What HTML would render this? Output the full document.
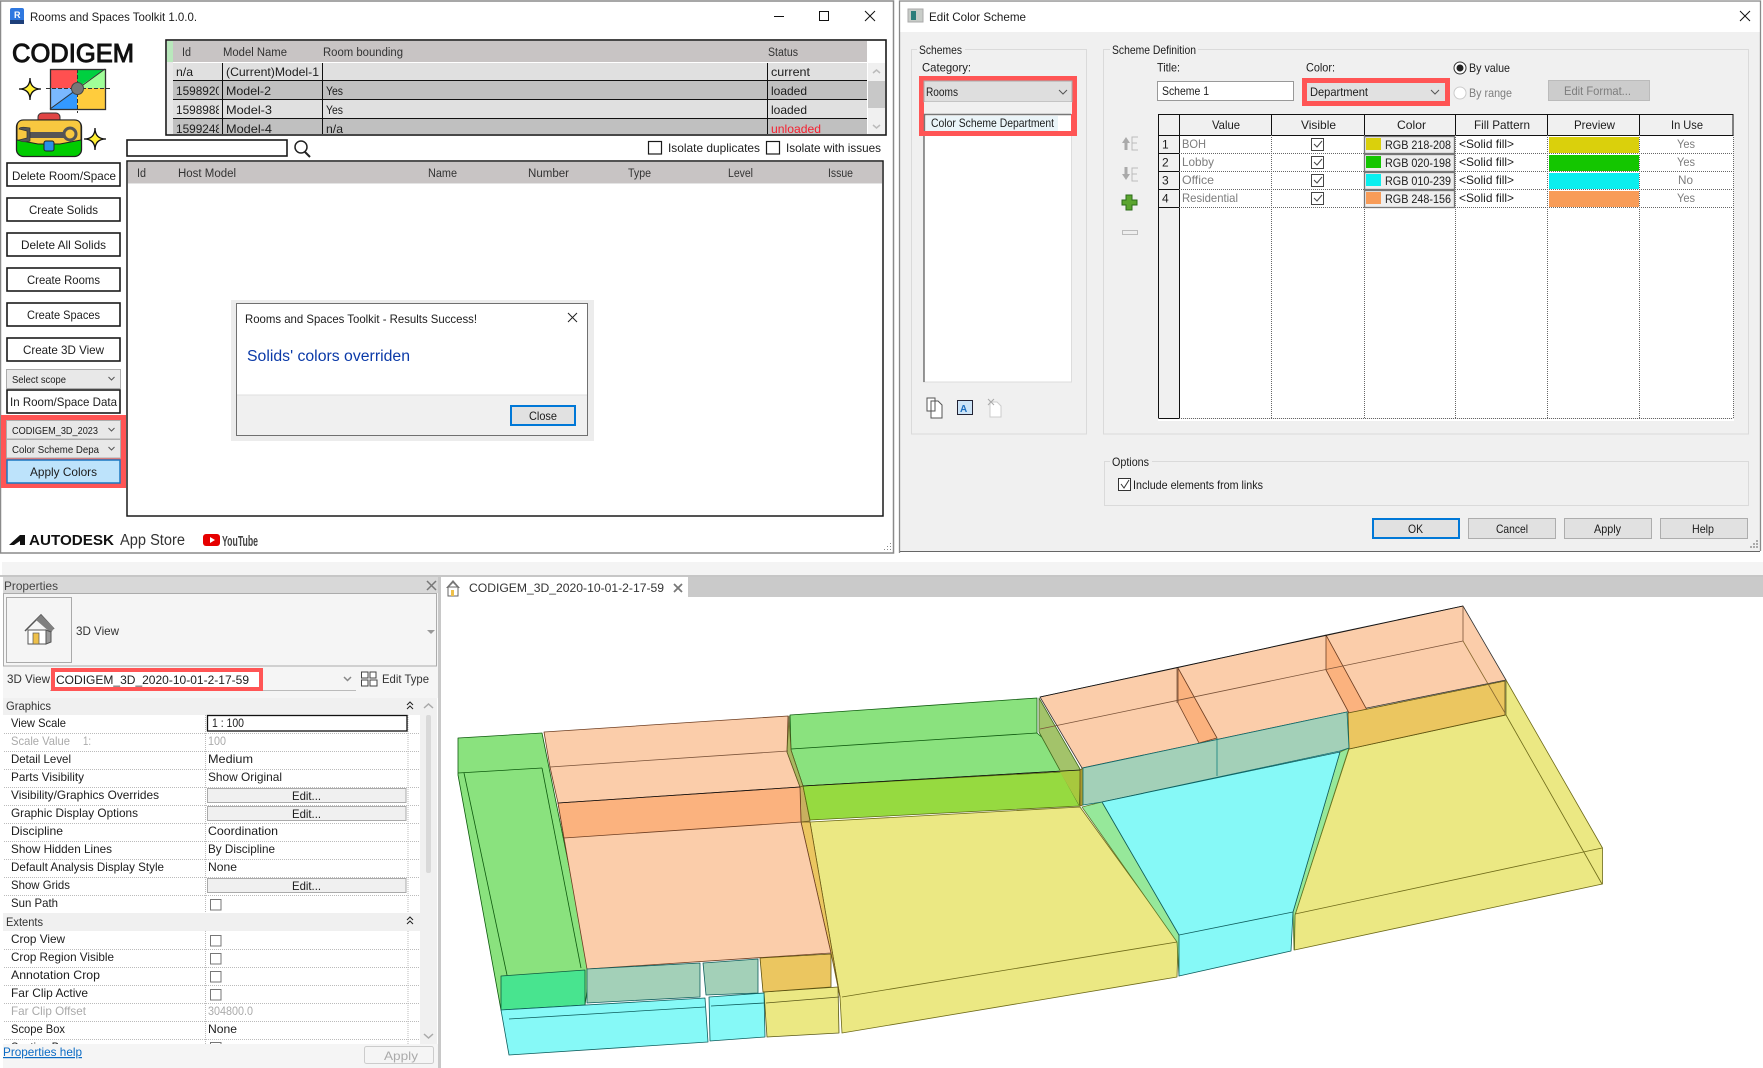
<!DOCTYPE html>
<html><head><meta charset="utf-8"><title>Rooms and Spaces Toolkit</title>
<style>
html,body{margin:0;padding:0;background:#fff;width:1763px;height:1068px;overflow:hidden}
svg{display:block}
text{font-family:"Liberation Sans",sans-serif;font-size:12px;fill:#1c1c1c}
.s{font-size:11.7px}.g{fill:#7d7d7d}.h{font-size:11.5px;fill:#333}
.chev{fill:none;stroke:#555;stroke-width:1}
.k{fill:#fff;stroke:#1a1a1a;stroke-width:1.6}
.d{stroke:#666;stroke-width:1;stroke-dasharray:1 1;fill:none}
.dl{stroke:#bbb;stroke-width:1;stroke-dasharray:1 1;fill:none}
.m polygon{stroke-width:.8;stroke-linejoin:round}
.m line,.m polyline{stroke-width:.8;fill:none}
</style></head><body>
<svg width="1763" height="1068" viewBox="0 0 1763 1068" xmlns="http://www.w3.org/2000/svg">
<rect width="1763" height="1068" fill="#fff"/>

<!-- WINDOW 1 -->
<rect x="0.5" y="1" width="893" height="552" fill="#fff" stroke="#8a8a8a" stroke-width="1.5"/>
<rect x="10" y="8" width="14" height="16" rx="2" fill="#2f78e0"/><rect x="10" y="20" width="14" height="4" fill="#1d3f7a"/>
<text x="14" y="18" style="font-size:9px;font-weight:bold;fill:#fff">R</text>
<text x="30" y="21" textLength="167" lengthAdjust="spacingAndGlyphs">Rooms and Spaces Toolkit 1.0.0.</text>
<line x1="774" y1="16.5" x2="784" y2="16.5" stroke="#111"/>
<rect x="819.5" y="11.5" width="9" height="9" fill="none" stroke="#111"/>
<path d="M865 11l10 10M875 11l-10 10" stroke="#111" fill="none"/>

<!-- logo -->
<text x="12" y="62" textLength="122" lengthAdjust="spacingAndGlyphs" style="font-size:26px;fill:#111;stroke:#111;stroke-width:1">CODIGEM</text>
<polygon points="50,69 77,69 77,88 50,88" fill="#ff5050"/>
<polygon points="77,69 105,69 105,88 77,88" fill="#00d040"/>
<polygon points="105,69 105,88 77,88" fill="#a0ff98"/>
<polygon points="50,88 77,88 77,109 50,109" fill="#7ab8ff"/>
<polygon points="77,88 77,109 50,109" fill="#3399ff"/>
<polygon points="77,88 105,88 105,109 77,109" fill="#ffcc3d"/>
<rect x="50.5" y="69.5" width="55" height="40" fill="none" stroke="#333" stroke-width="1.3"/>
<path d="M46 88.5H110M77.5 69V113" stroke="#333" stroke-width="1" stroke-dasharray="4 2" fill="none"/>
<line x1="50" y1="109" x2="105" y2="69" stroke="#333"/>
<circle cx="77.5" cy="88.5" r="6" fill="#777" stroke="#444"/>
<path d="M30 78Q30 89 41 89Q30 89 30 100Q30 89 19 89Q30 89 30 78Z" fill="#ffee33" stroke="#111" stroke-width="1.3"/>
<path d="M95 128Q95 139 106 139Q95 139 95 150Q95 139 84 139Q95 139 95 128Z" fill="#ffee33" stroke="#111" stroke-width="1.3"/>
<rect x="38" y="113" width="22" height="11" rx="4" fill="#e04545" stroke="#333"/>
<rect x="16.5" y="120" width="65" height="36.5" rx="7" fill="#00cc00" stroke="#222" stroke-width="1.3"/>
<path d="M17 127Q17 120 24 120H74Q81 120 81 127V140L60 144H38L17 140Z" fill="#f8c840" stroke="#222"/>
<path d="M28 135H64" stroke="#555" stroke-width="6"/>
<circle cx="70" cy="134" r="6" fill="#f8c840" stroke="#555" stroke-width="3"/>
<path d="M30 128Q20 126 19 129L27 131V138L19 140Q22 143 30 141Z" fill="#555" stroke="#333" stroke-width=".7"/>
<rect x="44" y="141" width="10" height="10" rx="2" fill="#2a90e8" stroke="#222"/>

<!-- side buttons -->
<rect class="k" x="7" y="163" width="113" height="23"/>
<rect class="k" x="7" y="198" width="113" height="23"/>
<rect class="k" x="7" y="233" width="113" height="23"/>
<rect class="k" x="7" y="268" width="113" height="23"/>
<rect class="k" x="7" y="303" width="113" height="23"/>
<rect class="k" x="7" y="338" width="113" height="23"/>
<text x="12" y="180" textLength="104" lengthAdjust="spacingAndGlyphs">Delete Room/Space</text>
<text x="29" y="214" textLength="69" lengthAdjust="spacingAndGlyphs">Create Solids</text>
<text x="21" y="249" textLength="85" lengthAdjust="spacingAndGlyphs">Delete All Solids</text>
<text x="27" y="284" textLength="73" lengthAdjust="spacingAndGlyphs">Create Rooms</text>
<text x="27" y="319" textLength="73" lengthAdjust="spacingAndGlyphs">Create Spaces</text>
<text x="23" y="354" textLength="81" lengthAdjust="spacingAndGlyphs">Create 3D View</text>
<rect x="6.500" y="369.500" width="114" height="19" fill="#e8e8e8" stroke="#acacac"/>
<text x="12" y="383" textLength="54" lengthAdjust="spacingAndGlyphs" style="font-size:10.5px">Select scope</text>
<path class="chev" d="M108.500 377l3 3 3-3"/>
<rect class="k" x="7" y="390" width="113" height="23"/>
<text x="10" y="406" textLength="107" lengthAdjust="spacingAndGlyphs">In Room/Space Data</text>
<rect x="1" y="415" width="125" height="73" fill="#ff5555"/>
<rect x="6.500" y="420.500" width="114" height="18.500" fill="#e8e8e8" stroke="#acacac"/>
<rect x="6.500" y="439.500" width="114" height="18.500" fill="#e8e8e8" stroke="#acacac"/>
<rect x="7" y="460" width="113" height="23" fill="#bde3fb" stroke="#1a78c2" stroke-width="1.500"/>
<text x="12" y="434" textLength="86" lengthAdjust="spacingAndGlyphs" style="font-size:10.5px">CODIGEM_3D_2023</text>
<path class="chev" d="M108.500 428l3 3 3-3"/>
<text x="12" y="453" textLength="87" lengthAdjust="spacingAndGlyphs" style="font-size:10.5px">Color Scheme Depa</text>
<path class="chev" d="M108.500 447l3 3 3-3"/>
<text x="30" y="476" textLength="67" lengthAdjust="spacingAndGlyphs">Apply Colors</text>

<!-- top table -->
<rect x="166" y="40" width="720" height="95" fill="#fff" stroke="#1a1a1a" stroke-width="1.600"/>
<rect x="167" y="41" width="6" height="21" fill="#b9e8bc"/>
<rect x="173" y="41" width="694" height="21" fill="#c8c4c4"/>
<rect x="167" y="62" width="6" height="72" fill="#e8e8e8"/>
<rect x="173" y="63" width="694" height="17" fill="#e0e0e0"/>
<rect x="173" y="81" width="694" height="18" fill="#c0c0c0"/>
<rect x="173" y="100" width="694" height="18" fill="#e0e0e0"/>
<rect x="173" y="119" width="694" height="15" fill="#c0c0c0"/>
<text class="h" x="182" y="56" textLength="9" lengthAdjust="spacingAndGlyphs">Id</text>
<text class="h" x="223" y="56" textLength="64" lengthAdjust="spacingAndGlyphs">Model Name</text>
<text class="h" x="323" y="56" textLength="80" lengthAdjust="spacingAndGlyphs">Room bounding</text>
<text class="h" x="768" y="56" textLength="30" lengthAdjust="spacingAndGlyphs">Status</text>
<text x="176" y="76" textLength="17" lengthAdjust="spacingAndGlyphs">n/a</text>
<text x="226" y="76" textLength="93" lengthAdjust="spacingAndGlyphs">(Current)Model-1</text>
<text x="771" y="76" textLength="39" lengthAdjust="spacingAndGlyphs">current</text>
<text x="176" y="95" textLength="46" lengthAdjust="spacingAndGlyphs">1598920</text>
<text x="226" y="95" textLength="45" lengthAdjust="spacingAndGlyphs">Model-2</text>
<text x="326" y="95" textLength="17" lengthAdjust="spacingAndGlyphs">Yes</text>
<text x="771" y="95" textLength="36" lengthAdjust="spacingAndGlyphs">loaded</text>
<text x="176" y="114" textLength="46" lengthAdjust="spacingAndGlyphs">1598988</text>
<text x="226" y="114" textLength="46" lengthAdjust="spacingAndGlyphs">Model-3</text>
<text x="326" y="114" textLength="17" lengthAdjust="spacingAndGlyphs">Yes</text>
<text x="771" y="114" textLength="36" lengthAdjust="spacingAndGlyphs">loaded</text>
<text x="176" y="133" textLength="46" lengthAdjust="spacingAndGlyphs">1599248</text>
<text x="226" y="133" textLength="46" lengthAdjust="spacingAndGlyphs">Model-4</text>
<text x="326" y="133" textLength="17" lengthAdjust="spacingAndGlyphs">n/a</text>
<text x="771" y="133" textLength="50" lengthAdjust="spacingAndGlyphs" style="fill:#f52030">unloaded</text>
<rect x="219" y="81" width="3" height="18" fill="#c0c0c0"/><rect x="219" y="100" width="3" height="18" fill="#e0e0e0"/><rect x="219" y="119" width="3" height="15" fill="#c0c0c0"/>
<path d="M173 80.500H867M173 99.500H867M173 118.500H867" stroke="#111" stroke-width="1"/>
<path d="M222.500 63V134M322.500 63V134M767.500 63V134" stroke="#111" stroke-width="1"/>
<rect x="868" y="63" width="17" height="71" fill="#f0f0f0"/>
<rect x="868" y="81" width="17" height="27" fill="#c8c8c8"/>
<path d="M873 73l3.500-3 3.500 3M873 125l3.500 3 3.500-3" fill="none" stroke="#bbb" stroke-width="1.500"/>

<!-- search -->
<rect class="k" x="127" y="140" width="160" height="16" stroke-width="1.300"/>
<circle cx="301" cy="147" r="6" fill="none" stroke="#222" stroke-width="1.500"/>
<line x1="305" y1="152" x2="310" y2="157" stroke="#222" stroke-width="2"/>
<rect class="k" x="648.500" y="141.500" width="13" height="12.500" style="stroke-width:1.200"/>
<text x="668" y="152" textLength="92" lengthAdjust="spacingAndGlyphs">Isolate duplicates</text>
<rect class="k" x="766.500" y="141.500" width="13" height="12.500" style="stroke-width:1.200"/>
<text x="786" y="152" textLength="95" lengthAdjust="spacingAndGlyphs">Isolate with issues</text>

<!-- big table -->
<rect x="127" y="161" width="756" height="355" fill="#fff" stroke="#1a1a1a" stroke-width="1.500"/>
<rect x="128" y="162" width="754" height="21" fill="#c8c4c4"/>
<rect x="128" y="183" width="754" height="1" fill="#e4e4e4"/>
<text class="h" x="137" y="177" textLength="9" lengthAdjust="spacingAndGlyphs">Id</text>
<text class="h" x="178" y="177" textLength="58" lengthAdjust="spacingAndGlyphs">Host Model</text>
<text class="h" x="428" y="177" textLength="29" lengthAdjust="spacingAndGlyphs">Name</text>
<text class="h" x="528" y="177" textLength="41" lengthAdjust="spacingAndGlyphs">Number</text>
<text class="h" x="628" y="177" textLength="23" lengthAdjust="spacingAndGlyphs">Type</text>
<text class="h" x="728" y="177" textLength="25" lengthAdjust="spacingAndGlyphs">Level</text>
<text class="h" x="828" y="177" textLength="25" lengthAdjust="spacingAndGlyphs">Issue</text>

<!-- dialog -->
<rect x="231" y="300" width="363" height="141" fill="#ececec"/>
<rect x="236.500" y="303.500" width="351" height="132" fill="#fff" stroke="#707070"/>
<rect x="237" y="395" width="350" height="40" fill="#f0f0f0"/>
<line x1="237" y1="395" x2="587" y2="395" stroke="#dfdfdf"/>
<text x="245" y="323" textLength="232" lengthAdjust="spacingAndGlyphs">Rooms and Spaces Toolkit - Results Success!</text>
<path d="M568 313l9 9M577 313l-9 9" stroke="#222" fill="none"/>
<text x="247" y="361" textLength="163" lengthAdjust="spacingAndGlyphs" style="font-size:15.500px;fill:#0b3aa8">Solids' colors overriden</text>
<rect x="511" y="406" width="64" height="19" fill="#e1e1e1" stroke="#0078d7" stroke-width="2"/>
<text x="529" y="420" textLength="28" lengthAdjust="spacingAndGlyphs">Close</text>

<!-- footer logos -->
<polygon points="9,545 20,535 25,535 25,545 20,545 20,541 14,545" fill="#111"/>
<text x="29" y="545" textLength="85" lengthAdjust="spacingAndGlyphs" style="font-size:14.500px;font-weight:bold;fill:#111">AUTODESK</text>
<text x="120" y="545" textLength="65" lengthAdjust="spacingAndGlyphs" style="font-size:15.500px;fill:#333">App Store</text>
<rect x="203" y="534" width="17" height="12" rx="3" fill="#e60000"/><polygon points="210,537 215,540 210,543" fill="#fff"/>
<text x="222" y="546" textLength="36" lengthAdjust="spacingAndGlyphs" style="font-size:15px;font-weight:bold;fill:#444">YouTube</text>
<path d="M890 543h1v1h-1zM887 546h1v1h-1zM890 546h1v1h-1zM884 549h1v1h-1zM887 549h1v1h-1zM890 549h1v1h-1z" fill="#888"/>

<!-- WINDOW 2 -->
<rect x="900" y="1" width="860" height="550" fill="#f0f0f0"/>
<rect x="900" y="2" width="860" height="30" fill="#fff"/>
<path d="M899.500 553V1H1760.500V551" fill="none" stroke="#8a8a8a" stroke-width="1.300"/>
<line x1="900" y1="551.500" x2="1760" y2="551.500" stroke="#666"/>
<rect x="908" y="9" width="15" height="13" fill="#c8ccc8" stroke="#aaa"/><rect x="911" y="11" width="5" height="9" fill="#2c7d7a"/>
<text x="929" y="21" textLength="97" lengthAdjust="spacingAndGlyphs">Edit Color Scheme</text>
<path d="M1740 11l10 10M1750 11l-10 10" stroke="#111" fill="none"/>

<!-- schemes group -->
<rect x="911.500" y="49.500" width="175" height="384.500" fill="none" stroke="#dadada"/>
<rect x="917" y="44" width="48" height="12" fill="#f0f0f0"/>
<text class="s" x="919" y="54" textLength="43" lengthAdjust="spacingAndGlyphs">Schemes</text>
<text class="s" x="922" y="71.500" textLength="49" lengthAdjust="spacingAndGlyphs">Category:</text>
<rect x="923.500" y="114" width="148" height="268" fill="#fff" stroke="#ddd"/>
<path d="M924 382V136" stroke="#777" stroke-width="1.500" fill="none"/>
<rect x="919" y="76" width="158" height="60" fill="#ff5555"/>
<rect x="924" y="81" width="148" height="21" fill="#dedede" stroke="#aaa"/>
<rect x="924" y="102" width="148" height="12" fill="#f0f0f0"/>
<rect x="924" y="114" width="147" height="17" fill="#fff"/>
<path d="M924.500 131V114.500H1071" stroke="#777" stroke-width="1.500" fill="none"/>
<rect x="926" y="116" width="132" height="15" fill="#eaf4f8"/>
<text class="s" x="926" y="96" textLength="32" lengthAdjust="spacingAndGlyphs">Rooms</text>
<path class="chev" d="M1059 90l4 4 4-4"/>
<text class="s" x="931" y="127" textLength="123" lengthAdjust="spacingAndGlyphs">Color Scheme Department</text>
<path d="M927 400h8v13h-8zM931 403h7l4 4v13h-11z" transform="translate(0,-2)" fill="#fff" stroke="#555"/>
<rect x="957.500" y="400.500" width="15" height="14" fill="#cde4f7" stroke="#223"/>
<text x="960" y="412" style="font-size:10px;font-weight:bold;fill:#1e6fc0">A</text>
<path d="M990 402h7l4 4v11h-11z" fill="#fff" stroke="#ccc"/>
<path d="M988 399l6 6M994 399l-6 6" stroke="#aaa"/>

<!-- scheme definition -->
<rect x="1103.500" y="49.500" width="645" height="384.500" fill="none" stroke="#dadada"/>
<rect x="1110" y="44" width="88" height="12" fill="#f0f0f0"/>
<text class="s" x="1112" y="54" textLength="84" lengthAdjust="spacingAndGlyphs">Scheme Definition</text>
<text class="s" x="1157" y="71.500" textLength="23" lengthAdjust="spacingAndGlyphs">Title:</text>
<rect x="1157.500" y="81.500" width="136" height="19" fill="#fff" stroke="#999"/>
<text class="s" x="1162" y="95" textLength="47" lengthAdjust="spacingAndGlyphs">Scheme 1</text>
<text class="s" x="1306" y="71.500" textLength="29" lengthAdjust="spacingAndGlyphs">Color:</text>
<rect x="1302" y="78" width="148" height="28" fill="#ff5555"/>
<rect x="1307" y="83" width="138" height="18" fill="#e1e1e1"/>
<text class="s" x="1310" y="96" textLength="58" lengthAdjust="spacingAndGlyphs">Department</text>
<path class="chev" d="M1431 90l4 4 4-4"/>
<circle cx="1460" cy="68" r="6" fill="#fff" stroke="#333"/><circle cx="1460" cy="68" r="3.500" fill="#222"/>
<text class="s" x="1469" y="72" textLength="41" lengthAdjust="spacingAndGlyphs">By value</text>
<circle cx="1460" cy="93" r="6" fill="#fff" stroke="#ccc"/>
<text class="s g" x="1469" y="97" textLength="43" lengthAdjust="spacingAndGlyphs">By range</text>
<rect x="1548.500" y="80.500" width="101" height="20" fill="#ccc" stroke="#bbb"/>
<text class="s g" x="1564" y="95" textLength="67" lengthAdjust="spacingAndGlyphs">Edit Format...</text>

<!-- side tool icons -->
<path d="M1122 143l4-6 4 6h-2.500v7h-3v-7z" fill="#aaa"/><path d="M1138 137h-6v13h6M1132 143h5" fill="none" stroke="#bbb"/>
<path d="M1122 174l4 6 4-6h-2.500v-7h-3v7z" fill="#aaa"/><path d="M1138 168h-6v13h6M1132 174h5" fill="none" stroke="#bbb"/>
<path d="M1126 195h6v5h5v5h-5v5h-6v-5h-4v-5h4z" fill="#5ba52f" stroke="#2c6d1a"/>
<rect x="1122.500" y="230.500" width="15" height="4" fill="#eee" stroke="#bbb"/>

<!-- grid -->
<rect x="1158" y="114" width="575.500" height="304" fill="#fff"/>
<rect x="1158" y="114" width="575.500" height="21" fill="#f0f0f0"/>
<rect x="1159" y="135" width="20" height="283" fill="#f0f0f0"/>
<path d="M1158.500 418.500V114.500H1733M1158 135.500H1733.500M1179.500 114V418M1271.500 114V135M1364.500 114V135M1455.500 114V135M1547.500 114V135M1639.500 114V135M1733 114V135" stroke="#111" fill="none"/>
<path d="M1159 153.500h20M1159 171.500h20M1159 189.500h20M1159 207.500h20M1159 418.500h20" stroke="#111"/>
<path class="d" d="M1179 153.500H1733M1179 171.500H1733M1179 189.500H1733M1179 207.500H1733M1179 418.500H1733M1271.500 135V418M1364.500 135V418M1455.500 135V418M1547.500 135V418M1639.500 135V418M1733.500 135V418"/>
<rect x="1158" y="419" width="576" height="2" fill="#fff"/>
<text class="s" x="1212" y="129" textLength="28" lengthAdjust="spacingAndGlyphs">Value</text>
<text class="s" x="1301" y="129" textLength="35" lengthAdjust="spacingAndGlyphs">Visible</text>
<text class="s" x="1397" y="129" textLength="29" lengthAdjust="spacingAndGlyphs">Color</text>
<text class="s" x="1474" y="129" textLength="56" lengthAdjust="spacingAndGlyphs">Fill Pattern</text>
<text class="s" x="1574" y="129" textLength="41" lengthAdjust="spacingAndGlyphs">Preview</text>
<text class="s" x="1671" y="129" textLength="32" lengthAdjust="spacingAndGlyphs">In Use</text>
<text x="1162" y="148.500">1</text><text x="1162" y="166.500">2</text><text x="1162" y="184.500">3</text><text x="1162" y="202.500">4</text>
<text class="s g" x="1182" y="148" textLength="24" lengthAdjust="spacingAndGlyphs">BOH</text>
<text class="s g" x="1182" y="166" textLength="32" lengthAdjust="spacingAndGlyphs">Lobby</text>
<text class="s g" x="1182" y="184" textLength="32" lengthAdjust="spacingAndGlyphs">Office</text>
<text class="s g" x="1182" y="202" textLength="56" lengthAdjust="spacingAndGlyphs">Residential</text>
<g fill="#fff" stroke="#444">
<rect x="1311.500" y="138.500" width="12" height="12"/><rect x="1311.500" y="156.500" width="12" height="12"/><rect x="1311.500" y="174.500" width="12" height="12"/><rect x="1311.500" y="192.500" width="12" height="12"/>
</g>
<path d="M1314 144l3 3 5-6M1314 162l3 3 5-6M1314 180l3 3 5-6M1314 198l3 3 5-6" fill="none" stroke="#444"/>
<g fill="#eee" stroke="#777" stroke-width="1.300">
<rect x="1364.500" y="136.500" width="90" height="17"/><rect x="1364.500" y="154.500" width="90" height="17"/><rect x="1364.500" y="172.500" width="90" height="17"/><rect x="1364.500" y="190.500" width="90" height="17"/>
</g>
<rect x="1366" y="138" width="15" height="12" fill="#dad00c"/><rect x="1366" y="156" width="15" height="12" fill="#14c600"/><rect x="1366" y="174" width="15" height="12" fill="#0aefef"/><rect x="1366" y="192" width="15" height="12" fill="#f89c58"/>
<text class="s" x="1385" y="149" textLength="66" lengthAdjust="spacingAndGlyphs">RGB 218-208</text>
<text class="s" x="1385" y="167" textLength="66" lengthAdjust="spacingAndGlyphs">RGB 020-198</text>
<text class="s" x="1385" y="185" textLength="66" lengthAdjust="spacingAndGlyphs">RGB 010-239</text>
<text class="s" x="1385" y="203" textLength="66" lengthAdjust="spacingAndGlyphs">RGB 248-156</text>
<text class="s" x="1459" y="148" textLength="55" lengthAdjust="spacingAndGlyphs">&lt;Solid fill&gt;</text>
<text class="s" x="1459" y="166" textLength="55" lengthAdjust="spacingAndGlyphs">&lt;Solid fill&gt;</text>
<text class="s" x="1459" y="184" textLength="55" lengthAdjust="spacingAndGlyphs">&lt;Solid fill&gt;</text>
<text class="s" x="1459" y="202" textLength="55" lengthAdjust="spacingAndGlyphs">&lt;Solid fill&gt;</text>
<rect x="1549" y="137" width="90" height="16" fill="#dad00c"/><rect x="1549" y="155" width="90" height="16" fill="#14c600"/><rect x="1549" y="173" width="90" height="16" fill="#0aefef"/><rect x="1549" y="191" width="90" height="16" fill="#f89c58"/>
<text class="s g" x="1677" y="148" textLength="18" lengthAdjust="spacingAndGlyphs">Yes</text>
<text class="s g" x="1677" y="166" textLength="18" lengthAdjust="spacingAndGlyphs">Yes</text>
<text class="s g" x="1678" y="184" textLength="15" lengthAdjust="spacingAndGlyphs">No</text>
<text class="s g" x="1677" y="202" textLength="18" lengthAdjust="spacingAndGlyphs">Yes</text>

<!-- options -->
<rect x="1104.500" y="461.500" width="644" height="44" fill="none" stroke="#dadada"/>
<rect x="1110" y="456" width="42" height="12" fill="#f0f0f0"/>
<text class="s" x="1112" y="466" textLength="37" lengthAdjust="spacingAndGlyphs">Options</text>
<rect x="1118.500" y="478.500" width="12" height="12" fill="#fff" stroke="#333"/>
<path d="M1121 484l3 4 5-8" fill="none" stroke="#333"/>
<text class="s" x="1133" y="489" textLength="130" lengthAdjust="spacingAndGlyphs">Include elements from links</text>
<rect x="1373" y="519" width="86" height="19" fill="#e1e1e1" stroke="#0078d7" stroke-width="2"/>
<g fill="#e1e1e1" stroke="#adadad"><rect x="1468.500" y="518.500" width="87" height="20"/><rect x="1564.500" y="518.500" width="87" height="20"/><rect x="1660.500" y="518.500" width="87" height="20"/></g>
<text class="s" x="1408" y="533" textLength="15" lengthAdjust="spacingAndGlyphs">OK</text>
<text class="s" x="1496" y="533" textLength="32" lengthAdjust="spacingAndGlyphs">Cancel</text>
<text class="s" x="1594" y="533" textLength="27" lengthAdjust="spacingAndGlyphs">Apply</text>
<text class="s" x="1692" y="533" textLength="22" lengthAdjust="spacingAndGlyphs">Help</text>
<path d="M1756 540h2v2h-2zM1753 543h2v2h-2zM1756 543h2v2h-2zM1750 546h2v2h-2zM1753 546h2v2h-2zM1756 546h2v2h-2z" fill="#aaa"/>

<!-- strips -->
<rect x="2" y="562" width="1761" height="13" fill="#f4f4f4"/>
<rect x="0" y="575" width="1763" height="2" fill="#c6c6c6"/>

<!-- PROPERTIES -->
<rect x="3" y="577" width="435" height="491" fill="#fff"/>
<rect x="3" y="577" width="435" height="16" fill="#d8d8d8"/>
<text x="4" y="590" textLength="54" lengthAdjust="spacingAndGlyphs" style="fill:#444">Properties</text>
<path d="M427 581l9 9M436 581l-9 9" stroke="#777" stroke-width="1.500"/>
<rect x="3" y="593" width="435" height="105" fill="#f5f5f5"/>
<rect x="3.500" y="593.500" width="433" height="72.500" fill="#f5f5f5" stroke="#ababab"/>
<rect x="6.500" y="597.500" width="65" height="65" fill="#f5f5f5" stroke="#aaa"/>
<path d="M25 631L41 615L54 629" fill="none" stroke="#555" stroke-width="1.500"/>
<polygon points="41,615 54,628 51,633 36,620" fill="#808080"/>
<rect x="28" y="630" width="18" height="14" fill="#fff" stroke="#555"/>
<polygon points="46,630 51,632 51,642 46,644" fill="#999" stroke="#555"/>
<rect x="33" y="633" width="6" height="11" fill="#eec04a" stroke="#555" stroke-width=".7"/>
<text x="76" y="635" textLength="43" lengthAdjust="spacingAndGlyphs" style="fill:#333">3D View</text>
<polygon points="427,630 435,630 431,634" fill="#999"/>
<text x="7" y="683" textLength="43" lengthAdjust="spacingAndGlyphs" style="fill:#333">3D View</text>
<line x1="50" y1="690.500" x2="356" y2="690.500" stroke="#bbb"/>
<rect x="51" y="668" width="212" height="23" fill="#ff5555"/>
<rect x="55" y="672" width="204" height="15" fill="#fff"/>
<text x="56" y="684" textLength="193" lengthAdjust="spacingAndGlyphs">CODIGEM_3D_2020-10-01-2-17-59</text>
<path d="M344 677l3.500 3.500 3.500-3.500" fill="none" stroke="#888" stroke-width="1.500"/>
<path d="M361.500 672h6.500v6h-6.500zM370 672h6v6h-6zM361.500 680h6.500v6h-6.500zM370 680h7v6h-7z" fill="#fff" stroke="#444"/>
<text x="382" y="683" textLength="47" lengthAdjust="spacingAndGlyphs" style="fill:#333">Edit Type</text>

<!-- property rows -->
<path class="dl" d="M4 733.500H420M4 751.500H420M4 769.500H420M4 787.500H420M4 805.500H420M4 823.500H420M4 841.500H420M4 859.500H420M4 877.500H420M4 895.500H420M4 913.500H420M4 949.500H420M4 967.500H420M4 985.500H420M4 1003.500H420M4 1021.500H420M4 1039.500H420M205.500 715V913M205.500 931V1044M408 715V913M408 931V1044"/>
<rect x="3" y="698" width="417" height="17" fill="#f0f0f0"/>
<text x="6" y="710" textLength="45" lengthAdjust="spacingAndGlyphs" style="fill:#333">Graphics</text>
<path d="M407 705l3-3 3 3M407 709l3-3 3 3" fill="none" stroke="#222"/>
<rect x="3" y="913" width="417" height="18" fill="#f0f0f0"/>
<text x="6" y="926" textLength="37" lengthAdjust="spacingAndGlyphs" style="fill:#333">Extents</text>
<path d="M407 920l3-3 3 3M407 924l3-3 3 3" fill="none" stroke="#222"/>
<rect x="207.500" y="715.500" width="199.500" height="15.500" fill="#fff" stroke="#111" stroke-width="1.300"/>
<g style="fill:#333">
<text x="11" y="727" textLength="55" lengthAdjust="spacingAndGlyphs">View Scale</text>
<text x="212" y="727" textLength="32" lengthAdjust="spacingAndGlyphs">1 : 100</text>
<text class="g" x="11" y="745" textLength="59" lengthAdjust="spacingAndGlyphs" style="fill:#aaa">Scale Value</text>
<text x="83" y="745" textLength="8" lengthAdjust="spacingAndGlyphs" style="fill:#aaa">1:</text>
<text x="208" y="745" textLength="18" lengthAdjust="spacingAndGlyphs" style="fill:#aaa">100</text>
<text x="11" y="763" textLength="60" lengthAdjust="spacingAndGlyphs">Detail Level</text>
<text x="208" y="763" textLength="45" lengthAdjust="spacingAndGlyphs">Medium</text>
<text x="11" y="781" textLength="73" lengthAdjust="spacingAndGlyphs">Parts Visibility</text>
<text x="208" y="781" textLength="74" lengthAdjust="spacingAndGlyphs">Show Original</text>
<text x="11" y="799" textLength="148" lengthAdjust="spacingAndGlyphs">Visibility/Graphics Overrides</text>
<text x="11" y="817" textLength="127" lengthAdjust="spacingAndGlyphs">Graphic Display Options</text>
<text x="11" y="835" textLength="52" lengthAdjust="spacingAndGlyphs">Discipline</text>
<text x="208" y="835" textLength="70" lengthAdjust="spacingAndGlyphs">Coordination</text>
<text x="11" y="853" textLength="101" lengthAdjust="spacingAndGlyphs">Show Hidden Lines</text>
<text x="208" y="853" textLength="67" lengthAdjust="spacingAndGlyphs">By Discipline</text>
<text x="11" y="871" textLength="153" lengthAdjust="spacingAndGlyphs">Default Analysis Display Style</text>
<text x="208" y="871" textLength="29" lengthAdjust="spacingAndGlyphs">None</text>
<text x="11" y="889" textLength="59" lengthAdjust="spacingAndGlyphs">Show Grids</text>
<text x="11" y="907" textLength="47" lengthAdjust="spacingAndGlyphs">Sun Path</text>
<text x="11" y="943" textLength="54" lengthAdjust="spacingAndGlyphs">Crop View</text>
<text x="11" y="961" textLength="103" lengthAdjust="spacingAndGlyphs">Crop Region Visible</text>
<text x="11" y="979" textLength="89" lengthAdjust="spacingAndGlyphs">Annotation Crop</text>
<text x="11" y="997" textLength="77" lengthAdjust="spacingAndGlyphs">Far Clip Active</text>
<text x="11" y="1015" textLength="75" lengthAdjust="spacingAndGlyphs" style="fill:#aaa">Far Clip Offset</text>
<text x="208" y="1015" textLength="45" lengthAdjust="spacingAndGlyphs" style="fill:#aaa">304800.0</text>
<text x="11" y="1033" textLength="54" lengthAdjust="spacingAndGlyphs">Scope Box</text>
<text x="208" y="1033" textLength="29" lengthAdjust="spacingAndGlyphs">None</text>
<text x="11" y="1051" textLength="60" lengthAdjust="spacingAndGlyphs">Section Box</text>
</g>
<g fill="#f0f0f0" stroke="#aaa"><rect x="207.500" y="788.500" width="198.500" height="14"/><rect x="207.500" y="806.500" width="198.500" height="14"/><rect x="207.500" y="878.500" width="198.500" height="14"/></g>
<text x="292" y="800" textLength="29" lengthAdjust="spacingAndGlyphs">Edit...</text>
<text x="292" y="818" textLength="29" lengthAdjust="spacingAndGlyphs">Edit...</text>
<text x="292" y="890" textLength="29" lengthAdjust="spacingAndGlyphs">Edit...</text>
<g fill="#fff" stroke="#777"><rect x="210.500" y="899.500" width="10.500" height="10.500"/><rect x="210.500" y="935.500" width="10.500" height="10.500"/><rect x="210.500" y="953.500" width="10.500" height="10.500"/><rect x="210.500" y="971.500" width="10.500" height="10.500"/><rect x="210.500" y="989.500" width="10.500" height="10.500"/><rect x="210.500" y="1042.500" width="10.500" height="10.500"/></g>
<rect x="420" y="698" width="17" height="346" fill="#f0f0f0"/>
<rect x="426" y="715" width="5" height="158" rx="2" fill="#d9d9d9"/>
<path d="M424 708l4.500-4 4.500 4M424 1034l4.500 4 4.500-4" fill="none" stroke="#aaa" stroke-width="1.500"/>
<rect x="3" y="1044" width="435" height="24" fill="#f5f5f5"/>
<text x="3" y="1056" textLength="79" lengthAdjust="spacingAndGlyphs" text-decoration="underline" style="fill:#0b6bc4">Properties help</text>
<rect x="364.500" y="1046.500" width="69" height="17" rx="2" fill="#f5f5f5" stroke="#ccc"/>
<text x="384" y="1060" textLength="34" lengthAdjust="spacingAndGlyphs" style="fill:#aaa">Apply</text>
<rect x="438" y="577" width="3" height="491" fill="#c8c8c8"/>

<!-- TAB BAR -->
<rect x="441" y="577" width="247" height="20" fill="#fff"/>
<rect x="688" y="577" width="1075" height="20" fill="#cacaca"/>
<polygon points="446,588 453,580 460,588 458,588 453,583 448,588" fill="#777"/>
<rect x="448" y="587" width="10" height="9" fill="#fff" stroke="#666"/><rect x="451" y="590" width="3" height="6" fill="#eec04a"/>
<text x="469" y="592" textLength="195" lengthAdjust="spacingAndGlyphs" style="fill:#333">CODIGEM_3D_2020-10-01-2-17-59</text>
<path d="M674 584l8 8M682 584l-8 8" stroke="#777" stroke-width="1.800"/>

<!-- 3D MODEL -->
<g class="m">
<!-- yellow -->
<polygon points="810,822 1080,807 1178,942 1177,977 1040,1000 842,1033 840,997" fill="#ebe883" stroke="#6e6a18"/>
<polygon points="764,992 838,987 839,1033 767,1037" fill="#ebe883" stroke="#5a5818"/>
<polygon points="1349,749 1506,715 1506,680 1602.500,848 1602.500,884 1294.500,950 1295,915" fill="#ebe883" stroke="#6e6a18"/>
<!-- gold strip between peach and yellow -->
<polygon points="801,822 810,822 840,997 831,953" fill="#ebc660" stroke="#6e5a18"/>
<!-- green -->
<polygon points="458,738 542,733 590,970 585,1005 501,1010 458,775" fill="#8ae27e" stroke="#0e5a0e"/>
<polygon points="790,715 1037,698 1037,733 1080,770 803,786 791,750" fill="#8ae27e" stroke="#0e5a0e"/>
<polygon points="1082,807 1102,802 1179,935 1179,976 1177,942" fill="#96e89a" stroke="#5e7a28"/>
<polygon points="1340,752 1349,748 1295,915 1294,950 1293,912" fill="#96e89a" stroke="#5e7a28"/>
<!-- peach -->
<polygon points="544,732 788,716 787,752 800,787 801,822 831,953 587,969 564,838 558,803 550,767" fill="#fbcdaa" stroke="#6e3e22"/>
<polygon points="1040,697 1176,668 1326,635 1463,606 1506,680 1347,712 1082,768" fill="#fbcdaa" stroke="#333"/>
<!-- overlays -->
<polygon points="789,716 791,750 803,786 800,787 787,752" fill="#a8b860" stroke="#5e5a20"/>
<polygon points="800,787 803,786 810,821 801,822" fill="#c8b060" stroke="#6e5a18"/>
<polygon points="558,803 800,787 801,822 564,838" fill="#fbb27e" stroke="#6e3e22"/>
<polygon points="803,786 1080,771 1080,806 810,820" fill="#96da40" stroke="#5a6a10"/>
<polygon points="1039,698 1080,769 1079,805 1039,732" fill="#a3c36a" stroke="#3e6a1e"/>
<polygon points="1059,770 1080,770 1079,805" fill="#a8c83e"/>
<polygon points="1080,770 1083,768 1083,805 1080,806" fill="#a89a30" stroke="#6e5a18"/>
<polygon points="1178,668 1217,738 1199,743 1178,703" fill="#fbb27e" stroke="#6e3e22"/>
<polygon points="1326,635 1367,710 1349,713 1326,670" fill="#fbb27e" stroke="#6e3e22"/>
<polygon points="1348,713 1505,681 1505,715 1349,749" fill="#ebc660" stroke="#5e5210"/>
<polygon points="1083,768 1347,712 1349,748 1340,751 1102,802 1083,805" fill="#a3d0b8" stroke="#0e6e6e"/>
<polygon points="1102,802 1340,752 1293,912 1291,951 1179,976 1179,935" fill="#86f9f7" stroke="#0e5e5e"/>
<polygon points="501,976 585,970 585,1005 501,1010" fill="#48e48f" stroke="#0e5a3e"/>
<polygon points="501,1010 705,998 708,1042 509,1055" fill="#86f9f7" stroke="#0e5e5e"/>
<polygon points="709,997 764,993 765,1037 710,1041" fill="#86f9f7" stroke="#0e5e5e"/>
<polygon points="587,969 700,963 700,997 587,1003" fill="#a3d0b8" stroke="#0e5e5e"/>
<polygon points="703,963 758,959 758,993 706,995" fill="#a3d0b8" stroke="#0e5e5e"/>
<polygon points="760,958 831,954 831,987 763,992" fill="#ebc660" stroke="#5e5210"/>
<!-- lines -->
<line x1="458" y1="773" x2="542" y2="768" stroke="#0e5a0e"/>
<line x1="464" y1="773" x2="507" y2="975" stroke="#0e5a0e"/>
<line x1="542" y1="768" x2="581" y2="968" stroke="#0e5a0e"/>
<line x1="550" y1="767" x2="788" y2="751" stroke="#7a5238"/>
<line x1="558" y1="803" x2="800" y2="787" stroke="#111"/>
<line x1="791" y1="749" x2="1037" y2="733" stroke="#0e5a0e"/>
<line x1="803" y1="786" x2="1080" y2="770" stroke="#111"/>
<line x1="1040" y1="729" x2="1463" y2="641" stroke="#7a5238"/>
<line x1="1463" y1="606" x2="1463" y2="641" stroke="#7a5238"/>
<line x1="1463" y1="641" x2="1505" y2="713" stroke="#8a6a30"/>
<line x1="1177" y1="668" x2="1177" y2="703" stroke="#7a5238"/>
<line x1="1295" y1="914" x2="1602" y2="848" stroke="#6e6a18"/>
<line x1="1506" y1="715" x2="1602" y2="884" stroke="#6e6a18"/>
<line x1="842" y1="997" x2="1177" y2="942" stroke="#6e6a18"/>
<line x1="766" y1="1003" x2="839" y2="997" stroke="#5a5818"/>
<line x1="509" y1="1019" x2="705" y2="1007" stroke="#0e5e5e"/>
<line x1="711" y1="1006" x2="764" y2="1003" stroke="#0e5e5e"/>
<line x1="1179" y1="935" x2="1293" y2="912" stroke="#0e5e5e"/>
<line x1="1217" y1="738" x2="1217" y2="776" stroke="#0e7e7e"/>
<line x1="1040" y1="697" x2="1463" y2="606" stroke="#111"/>
</g>
</svg>
</body></html>
